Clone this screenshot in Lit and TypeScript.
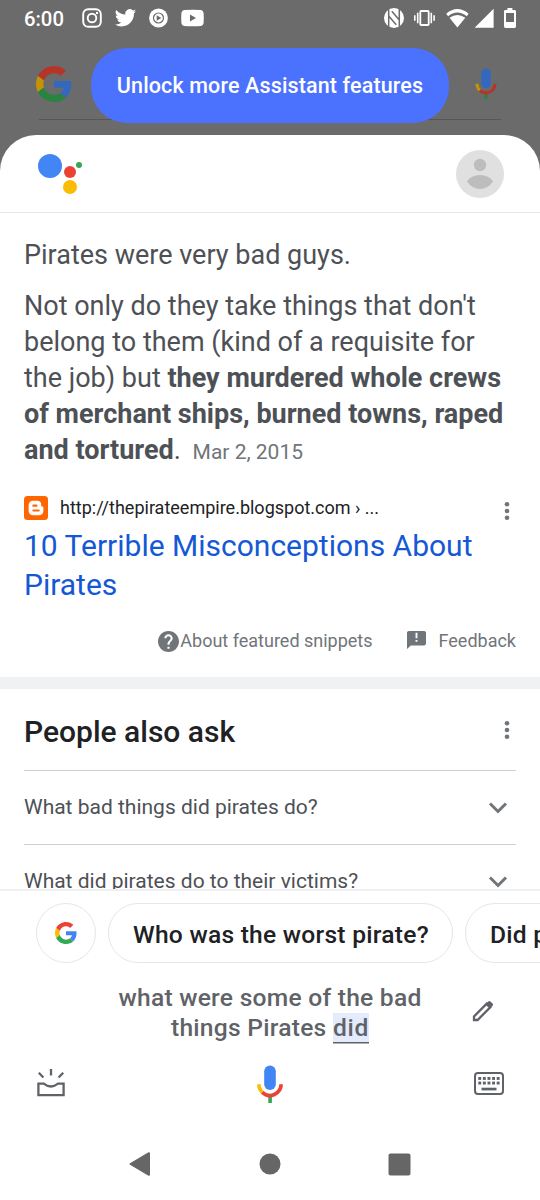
import { LitElement, html, css, svg } from "lit";
import { customElement } from "lit/decorators.js";

const googleG = (size: number) => html`<svg width=${size} height=${size} viewBox="0 0 48 48">
  <path fill="#EA4335" d="M24 9.5c3.54 0 6.71 1.22 9.21 3.6l6.85-6.85C35.9 2.38 30.47 0 24 0 14.62 0 6.51 5.38 2.56 13.22l7.98 6.19C12.43 13.72 17.74 9.5 24 9.5z"/>
  <path fill="#4285F4" d="M46.98 24.55c0-1.57-.15-3.09-.38-4.55H24v9.02h12.94c-.58 2.96-2.26 5.48-4.78 7.18l7.73 6c4.51-4.18 7.09-10.36 7.09-17.65z"/>
  <path fill="#FBBC05" d="M10.53 28.59c-.48-1.45-.76-2.99-.76-4.59s.27-3.14.76-4.59l-7.98-6.19C.92 16.46 0 20.12 0 24c0 3.88.92 7.54 2.56 10.78l7.97-6.19z"/>
  <path fill="#34A853" d="M24 48c6.48 0 11.93-2.13 15.89-5.81l-7.73-6c-2.15 1.45-4.92 2.3-8.16 2.3-6.26 0-11.57-4.22-13.47-9.91l-7.98 6.19C6.51 42.62 14.62 48 24 48z"/>
</svg>`;

const mic = (w: number, h: number) => html`<svg width=${w} height=${h} viewBox="0 0 26 38">
  <rect x="7.2" y="0.5" width="11.6" height="24.5" rx="5.8" fill="#4285F4"/>
  <path d="M11.3 29h3.6v9h-3.6z" fill="#34A853"/>
  <path d="M1.9 19.3a11.2 11.2 0 0 0 3.7 8.3" fill="none" stroke="#FBBC05" stroke-width="3.7"/>
  <path d="M5.3 27.4A11.2 11.2 0 0 0 24.1 19.3" fill="none" stroke="#EA4335" stroke-width="3.7"/>
</svg>`;

const dots = html`<svg width="6" height="20" viewBox="0 0 6 20" fill="#70757a">
  <circle cx="3" cy="3.2" r="2.3"/><circle cx="3" cy="10" r="2.3"/><circle cx="3" cy="16.8" r="2.3"/></svg>`;

const chevron = html`<svg width="20" height="14" viewBox="0 0 20 14">
  <path d="M2 2.5l8 8 8-8" fill="none" stroke="#70757a" stroke-width="3"/></svg>`;

@customElement("status-bar")
class StatusBar extends LitElement {
  static styles = css`
    :host { display: flex; height: 36px; padding: 0 24px; justify-content: space-between; color: #fff; font: 500 20.3px/38px Roboto, sans-serif; }
    .group { display: flex; align-items: center; height: 36px; }
    .left { gap: 13px; }
    .time { margin-right: 5px; line-height: 38px; padding-top: 2px; }
    svg { display: block; flex: none; }
  `;
  render() {
    return html`
      <div class="group left">
        <span class="time">6:00</span>
        <svg width="20" height="20" viewBox="0 0 20 20" fill="none" stroke="#fff">
          <rect x="1.2" y="1.2" width="17.6" height="17.6" rx="5" stroke-width="1.9"/>
          <circle cx="10" cy="10" r="4.3" stroke-width="1.9"/><circle cx="15" cy="5" r="1.2" fill="#fff" stroke="none"/>
        </svg>
        <svg width="21" height="20" viewBox="1 2.5 22.5 19.5" fill="#fff"><path d="M23.64 4.94c-.84.37-1.74.62-2.68.73.96-.58 1.7-1.5 2.05-2.58-.9.53-1.9.92-2.96 1.13a4.67 4.67 0 0 0-7.95 4.26A13.24 13.24 0 0 1 2.47 3.6a4.66 4.66 0 0 0 1.45 6.23c-.77-.02-1.49-.23-2.12-.58v.06a4.67 4.67 0 0 0 3.75 4.57c-.69.19-1.42.22-2.11.08a4.67 4.67 0 0 0 4.36 3.24A9.36 9.36 0 0 1 .9 19.13a13.2 13.2 0 0 0 7.15 2.1c8.59 0 13.28-7.11 13.28-13.28l-.01-.6c.91-.66 1.7-1.48 2.32-2.41z"/></svg>
        <svg width="19" height="20" viewBox="0 0 19 20">
          <circle cx="9.5" cy="10" r="9.4" fill="#fff"/><circle cx="9.5" cy="10" r="5" fill="none" stroke="#6b6b6b" stroke-width="1.2"/>
          <path d="M7.7 7.2v5.6l4.6-2.8z" fill="#6b6b6b"/>
        </svg>
        <svg width="23" height="18" viewBox="0 0 23 18">
          <path d="M3 1.1Q11.5.3 20 1.1 22.3 1.4 22.6 4 23 9 22.6 14 22.3 16.6 20 16.9 11.5 17.7 3 16.9.7 16.6.4 14 0 9 .4 4 .7 1.4 3 1.1z" fill="#fff"/>
          <path d="M9 5.6v6.8l6-3.4z" fill="#6b6b6b"/>
        </svg>
      </div>
      <div class="group">
        <svg width="132" height="22" viewBox="384 7 132 22" fill="#fff">
          <circle cx="394" cy="18" r="10"/>
          <path d="M388.7 9.5v18M399.3 8.5v18M391.8 11.2l7.5 8.8M388.7 16l7.5 8.8" fill="none" stroke="#6b6b6b" stroke-width="1.5"/>
          <rect x="420.3" y="11" width="8.4" height="14" rx=".8" fill="none" stroke="#fff" stroke-width="1.8"/>
          <path d="M416.9 12.8h1.6v10.4h-1.6zM430.5 12.8h1.6v10.4h-1.6zM414 15.2h1.6v5.6H414zM433.3 15.2h1.6v5.6h-1.6z"/>
          <path d="M446.2 13.7q11.2-9.2 22.4 0l-1.9 2.6q-9.3-7.5-18.6 0zM449.5 17.8q7.9-5.7 15.8 0l-7.9 9.7z"/>
          <path d="M493.6 8.8v18.9h-19z"/>
          <path d="M507.4 8h5v2h2.2q1.4 0 1.4 1.4V26.5q0 1.4-1.4 1.4h-9.2q-1.4 0-1.4-1.4V11.4q0-1.4 1.4-1.4h2z"/>
          <path d="M506 13h8v9h-8z" fill="#6b6b6b"/>
        </svg>
      </div>`;
  }
}

@customElement("search-backdrop")
class SearchBackdrop extends LitElement {
  static styles = css`
    :host { display: block; height: 99px; padding: 0 39px; }
    .bar { display: flex; align-items: center; height: 84px; border-bottom: 1px solid #575757; box-sizing: border-box; }
    .dim { display: flex; filter: brightness(.78); padding-top: 12px; }
    .logo { margin-left: -3px; }
    .mic { margin-left: auto; margin-right: 4px; }
    .pill { margin: 12px 0 -4px 19px; flex: none; width: 358px; height: 75px; border-radius: 36px; background: #4b71ff; color: #fff; position: relative;
      display: flex; align-items: center; justify-content: center; font: 500 21.5px/24px Roboto, sans-serif; letter-spacing: .13px; white-space: nowrap; }
  `;
  render() {
    return html`<div class="bar">
      <div class="dim logo">${googleG(36)}</div>
      <div class="pill">Unlock more Assistant features</div>
      <div class="dim mic">${mic(22, 31)}</div>
    </div>`;
  }
}

@customElement("featured-answer")
class FeaturedAnswer extends LitElement {
  static styles = css`
    :host { display: block; flex: none; padding: 24px 24px 0; height: 464px; box-sizing: border-box; font-family: Roboto, sans-serif; color: #4d5156; }
    p { margin: 0 0 15px; font-size: 27px; line-height: 36px; white-space: nowrap; }
    .date { font-size: 21px; color: #70757a; margin-left: 5px; line-height: 30px; }
    .site { display: flex; align-items: center; margin-top: 28px; height: 24px; font-size: 18px; line-height: 24px; color: #202124; }
    .url { margin: 0 0 0 12px; flex: 1; }
    .more { display: flex; margin-right: 6px; padding-top: 6px; }
    h2 { margin: 6px 0 0; font-weight: 400; font-size: 30px; line-height: 39px; color: #1558d6; }
    .foot { display: flex; align-items: center; justify-content: flex-end; margin-top: 24px; height: 26px; font-size: 18px; line-height: 26px; color: #70757a; }
    .flag { margin: -3px 13px 0 34px; }
    svg { display: block; }
    .help { margin-right: 1px; }
  `;
  render() {
    return html`
      <p>Pirates were very bad guys.</p>
      <p>Not only do they take things that don't<br>belong to them (kind of a requisite for<br>the job) but <b>they murdered whole crews<br>of merchant ships, burned towns, raped<br>and tortured</b>. <span class="date">Mar 2, 2015</span></p>
      <div class="site">
        <svg width="24" height="24" viewBox="0 0 24 24"><rect width="24" height="24" rx="3.5" fill="#f60"/>
          <path fill="#fff" fill-rule="evenodd" d="M9 4.8h4.2a4 4 0 0 1 4 4v.8q.1.9 1 .9 1.2.1 1.2 1.3v3a4.6 4.6 0 0 1-4.6 4.4H9a4.4 4.4 0 0 1-4.4-4.4V9.2A4.4 4.4 0 0 1 9 4.8zM9.4 8.6a1.1 1.1 0 0 0 0 2.2h3a1.1 1.1 0 0 0 0-2.2zM9.4 13.4a1.1 1.1 0 0 0 0 2.2h5.3a1.1 1.1 0 0 0 0-2.2z"/></svg>
        <span class="url">http://thepirateempire.blogspot.com › ...</span>
        <span class="more">${dots}</span>
      </div>
      <h2>10 Terrible Misconceptions About Pirates</h2>
      <div class="foot">
        <svg class="help" width="21" height="21" viewBox="2 2 20 20" fill="#70757a"><path d="M12 2C6.48 2 2 6.48 2 12s4.48 10 10 10 10-4.48 10-10S17.52 2 12 2zm1 17h-2v-2h2v2zm2.07-7.75l-.9.92C13.45 12.9 13 13.5 13 15h-2v-.5c0-1.1.45-2.1 1.17-2.83l1.24-1.26c.37-.36.59-.86.59-1.41 0-1.1-.9-2-2-2s-2 .9-2 2H8c0-2.21 1.79-4 4-4s4 1.79 4 4c0 .88-.36 1.68-.93 2.25z"/></svg>
        <span>About featured snippets</span>
        <svg class="flag" width="19" height="18" viewBox="2 2 20 20" preserveAspectRatio="none" fill="#70757a"><path d="M20 2H4c-1.1 0-1.99.9-1.99 2L2 22l4-4h14c1.1 0 2-.9 2-2V4c0-1.1-.9-2-2-2zm-7 12h-2v-2h2v2zm0-4h-2V4h2v6z"/></svg>
        <span>Feedback</span>
      </div>`;
  }
}

@customElement("people-ask")
class PeopleAsk extends LitElement {
  static styles = css`
    :host { display: block; flex: none; border-top: 12px solid #f0f1f3; padding: 0 24px; height: 212px; box-sizing: border-box; overflow: hidden; font-family: Roboto, sans-serif; color: #4d5156; }
    .head { display: flex; align-items: center; justify-content: space-between; height: 81px; color: #202124; }
    h3 { margin: 5px 0 0; font-weight: 500; font-size: 30px; line-height: 36px; }
    .more { display: flex; margin-right: 6px; }
    .q { display: flex; align-items: center; justify-content: space-between; height: 73px; border-top: 1px solid #cdcfd2; font-size: 21px; line-height: 73px; padding-right: 8px; }
    svg { display: block; }
  `;
  render() {
    return html`
      <div class="head"><h3>People also ask</h3><span class="more">${dots}</span></div>
      ${["What bad things did pirates do?", "What did pirates do to their victims?"].map(
        (t) => html`<div class="q"><span>${t}</span>${chevron}</div>`)}`;
  }
}

@customElement("assistant-dock")
class AssistantDock extends LitElement {
  static styles = css`
    :host { display: block; flex: none; height: 311px; box-sizing: border-box; border-top: 2px solid #eeeff1; background: #fff; font: 500 24.6px/30px Roboto, sans-serif; letter-spacing: .25px; }
    .chips { display: flex; gap: 12px; padding: 12px 0 0 36px; overflow: hidden; }
    .chip { flex: none; box-sizing: border-box; height: 60px; border: 1.5px solid #e4e6e9; border-radius: 30px; padding: 4px 0 0 24px; width: 345px; display: flex; align-items: center; color: #202124; white-space: nowrap; }
    .logo { width: 60px; padding: 0; justify-content: center; }
    .query { display: flex; align-items: center; height: 60px; margin-top: 20px; color: #5f6368; }
    .text { width: 308px; margin-left: 116px; text-align: center; }
    .mark { background: #e3ebfc; box-shadow: 0 1.5px #5f6368; letter-spacing: .7px; }
    .pencil { margin: -4px 0 0 48px; }
    .actions { display: flex; justify-content: space-between; align-items: center; padding: 0 36px; margin-top: 20px; height: 42px; }
    .nav { display: flex; justify-content: center; align-items: center; margin-top: 46px; height: 26px; gap: 107px; }
    svg { display: block; flex: none; }
    .back { margin-right: 1px; }
    .tray, .keys { margin-top: -2px; }
  `;
  render() {
    return html`
      <div class="chips">
        <div class="chip logo">${googleG(22)}</div>
        <div class="chip">Who was the worst pirate?</div>
        <div class="chip">Did pirates</div>
      </div>
      <div class="query">
        <div class="text">what were some of the bad<br>things Pirates <span class="mark">did</span></div>
        <svg class="pencil" width="22" height="22" viewBox="0 0 22 22">
          <path d="M2 20v-3.6L14.7 3.7l3.6 3.6L5.6 20z" fill="none" stroke="#5f6368" stroke-width="2.3"/>
          <path d="M13.3 4.3l2.9-2.9q1.1-1 2.2 0l2.2 2.2q1 1.1 0 2.2l-2.9 2.9z" fill="#5f6368"/>
        </svg>
      </div>
      <div class="actions">
        <svg class="tray" width="30" height="30" viewBox="36 1067 30 30" fill="none" stroke="#5f6368" stroke-width="2.3">
          <path d="M38.4 1082.7h5.4q7 5.6 14.2 0h5.6v11.5H38.4z"/><path d="M51 1068v6.5M38.8 1071.7l4.6 4.8M63.2 1071.7l-4.6 4.8"/>
        </svg>
        ${mic(26, 38)}
        <svg class="keys" width="30" height="23" viewBox="0 0 30 23" fill="#5f6368">
          <rect x="1" y="1" width="28" height="21" rx="3" fill="none" stroke="#5f6368" stroke-width="2"/>
          ${[4.3, 8.9, 13.5, 18.1, 22.7].map((x) => svg`<rect x=${x} y="5" width="2.9" height="2.9"/><rect x=${x} y="9.6" width="2.9" height="2.9"/>`)}
          <rect x="7.5" y="15.7" width="15" height="2.7"/>
        </svg>
      </div>
      <div class="nav">
        <svg class="back" width="22" height="26" viewBox="0 0 22 26"><path d="M1.5 13L20 2.2V23.8z" fill="#666" stroke="#666" stroke-width="2" stroke-linejoin="round"/></svg>
        <svg width="22" height="22"><circle cx="11" cy="11" r="10.5" fill="#666"/></svg>
        <svg width="23" height="23"><rect x=".5" y=".5" width="22" height="22" rx="2" fill="#666"/></svg>
      </div>`;
  }
}

@customElement("app-root")
class AppRoot extends LitElement {
  static styles = css`
    :host { display: flex; flex-direction: column; width: 540px; height: 1200px; overflow: hidden; background: #6b6b6b; }
    .sheet { display: flex; flex-direction: column; height: 1065px; border-radius: 36px 36px 0 0; background: #fff; overflow: hidden; }
    .head { display: flex; flex: none; justify-content: space-between; height: 78px; box-sizing: border-box; border-bottom: 1px solid #e6e6e7; padding: 15px 36px 0; }
    svg { display: block; }
  `;
  render() {
    return html`
      <status-bar></status-bar>
      <search-backdrop></search-backdrop>
      <div class="sheet">
        <div class="head">
          <svg width="48" height="48" viewBox="36 150 48 48">
            <circle cx="50" cy="166" r="12" fill="#4285F4"/><circle cx="70" cy="172" r="6" fill="#EA4335"/>
            <circle cx="70" cy="187" r="7" fill="#FBBC05"/><circle cx="79" cy="165" r="3" fill="#34A853"/>
          </svg>
          <svg width="48" height="48" viewBox="0 0 48 48"><circle cx="24" cy="24" r="24" fill="#e0e0e0"/>
            <circle cx="24" cy="15" r="6.2" fill="#bdbdbd"/><path d="M11 31.5Q15 25 24 25t13 6.5Q32 39 24 39T11 31.5z" fill="#bdbdbd"/></svg>
        </div>
        <featured-answer></featured-answer>
        <people-ask></people-ask>
        <assistant-dock></assistant-dock>
      </div>`;
  }
}
